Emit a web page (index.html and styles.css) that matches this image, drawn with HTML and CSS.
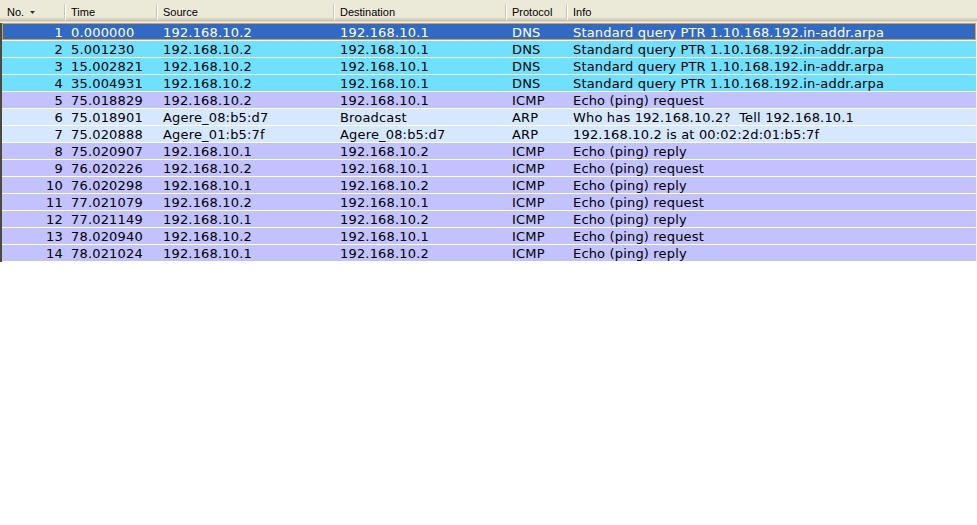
FILE: index.html
```html
<!DOCTYPE html>
<html>
<head>
<meta charset="utf-8">
<link rel="stylesheet" href="styles.css">
</head>
<body>
<div class="list">
  <div class="head">
    <div class="hcell"><span class="label">No.</span><svg class="sort" width="5" height="3" viewBox="0 0 5 3"><polygon points="0,0 5,0 2.5,3" fill="#333"/></svg></div>
    <div class="hcell"><span class="sep"></span><span class="label">Time</span></div>
    <div class="hcell"><span class="sep"></span><span class="label">Source</span></div>
    <div class="hcell"><span class="sep"></span><span class="label">Destination</span></div>
    <div class="hcell"><span class="sep"></span><span class="label">Protocol</span></div>
    <div class="hcell"><span class="sep"></span><span class="label">Info</span></div>
  </div>
  <div class="rows">
    <div class="row sel"><span class="no">1</span><span>0.000000</span><span>192.168.10.2</span><span>192.168.10.1</span><span>DNS</span><span>Standard query PTR 1.10.168.192.in-addr.arpa</span></div>
    <div class="row dns"><span class="no">2</span><span>5.001230</span><span>192.168.10.2</span><span>192.168.10.1</span><span>DNS</span><span>Standard query PTR 1.10.168.192.in-addr.arpa</span></div>
    <div class="row dns"><span class="no">3</span><span>15.002821</span><span>192.168.10.2</span><span>192.168.10.1</span><span>DNS</span><span>Standard query PTR 1.10.168.192.in-addr.arpa</span></div>
    <div class="row dns"><span class="no">4</span><span>35.004931</span><span>192.168.10.2</span><span>192.168.10.1</span><span>DNS</span><span>Standard query PTR 1.10.168.192.in-addr.arpa</span></div>
    <div class="row icmp"><span class="no">5</span><span>75.018829</span><span>192.168.10.2</span><span>192.168.10.1</span><span>ICMP</span><span>Echo (ping) request</span></div>
    <div class="row arp"><span class="no">6</span><span>75.018901</span><span>Agere_08:b5:d7</span><span>Broadcast</span><span>ARP</span><span>Who has 192.168.10.2?  Tell 192.168.10.1</span></div>
    <div class="row arp"><span class="no">7</span><span>75.020888</span><span>Agere_01:b5:7f</span><span>Agere_08:b5:d7</span><span>ARP</span><span>192.168.10.2 is at 00:02:2d:01:b5:7f</span></div>
    <div class="row icmp"><span class="no">8</span><span>75.020907</span><span>192.168.10.1</span><span>192.168.10.2</span><span>ICMP</span><span>Echo (ping) reply</span></div>
    <div class="row icmp"><span class="no">9</span><span>76.020226</span><span>192.168.10.2</span><span>192.168.10.1</span><span>ICMP</span><span>Echo (ping) request</span></div>
    <div class="row icmp"><span class="no">10</span><span>76.020298</span><span>192.168.10.1</span><span>192.168.10.2</span><span>ICMP</span><span>Echo (ping) reply</span></div>
    <div class="row icmp"><span class="no">11</span><span>77.021079</span><span>192.168.10.2</span><span>192.168.10.1</span><span>ICMP</span><span>Echo (ping) request</span></div>
    <div class="row icmp"><span class="no">12</span><span>77.021149</span><span>192.168.10.1</span><span>192.168.10.2</span><span>ICMP</span><span>Echo (ping) reply</span></div>
    <div class="row icmp"><span class="no">13</span><span>78.020940</span><span>192.168.10.2</span><span>192.168.10.1</span><span>ICMP</span><span>Echo (ping) request</span></div>
    <div class="row icmp"><span class="no">14</span><span>78.021024</span><span>192.168.10.1</span><span>192.168.10.2</span><span>ICMP</span><span>Echo (ping) reply</span></div>
  </div>
</div>
</body>
</html>
```
FILE: styles.css
```css
html, body {
  margin: 0;
  padding: 0;
  background: #ffffff;
  width: 977px;
  height: 525px;
  overflow: hidden;
}

.list {
  width: 977px;
}

.head {
  display: grid;
  grid-template-columns: 64px 92px 177px 172px 61px 1fr;
  height: 23px;
  box-sizing: border-box;
  background: linear-gradient(to bottom, #ebe9d8 0px, #ebe9d8 17px, #e3e0cf 18px, #d9d5c4 19px, #ccc8b7 20px, #c5c1b0 21px, #f4f2ea 22px);
  font-family: "Liberation Sans", Arial, sans-serif;
  font-size: 11px;
  color: #000;
}

.hcell {
  display: flex;
  align-items: center;
  padding-top: 2px;
  box-sizing: border-box;
  height: 22px;
}

.hcell:first-child .label {
  margin-left: 7px;
}

.label {
  margin-left: 5px;
}

.sep {
  width: 1px;
  height: 16px;
  background: #c9c6b4;
  border-right: 1px solid #ffffff;
}

.sort {
  margin-left: 6px;
  margin-top: 1px;
}

.rows {
  border-left: 2px solid #4a4a40;
  border-right: 1px solid #f3f1e6;
  box-sizing: border-box;
  width: 977px;
  background: #ffffff;
  display: flex;
  flex-direction: column;
  gap: 1px;
  padding-bottom: 1px;
}

.row {
  display: grid;
  grid-template-columns: 62px 92px 177px 172px 61px 1fr;
  height: 16px;
  box-sizing: border-box;
  padding-top: 1px;
  line-height: 16px;
  font-family: "DejaVu Sans", Verdana, sans-serif;
  font-size: 13px;
  letter-spacing: 0.17px;
  color: #000;
  white-space: pre;
}

.row span {
  padding-left: 7px;
  overflow: hidden;
  height: 15px;
}

.row .no {
  text-align: right;
  padding-left: 0;
  padding-right: 1px;
}

.row .no + span {
  padding-left: 7px;
}

.sel {
  background: #316ac5;
  color: #ffffff;
  height: 17px;
  padding-top: 2px;
  box-shadow: inset 0 0 0 1px #e59c35;
}

.dns {
  background: #70e0ff;
}

.icmp {
  background: #c2c2ff;
}

.arp {
  background: #d6e8ff;
}
```
